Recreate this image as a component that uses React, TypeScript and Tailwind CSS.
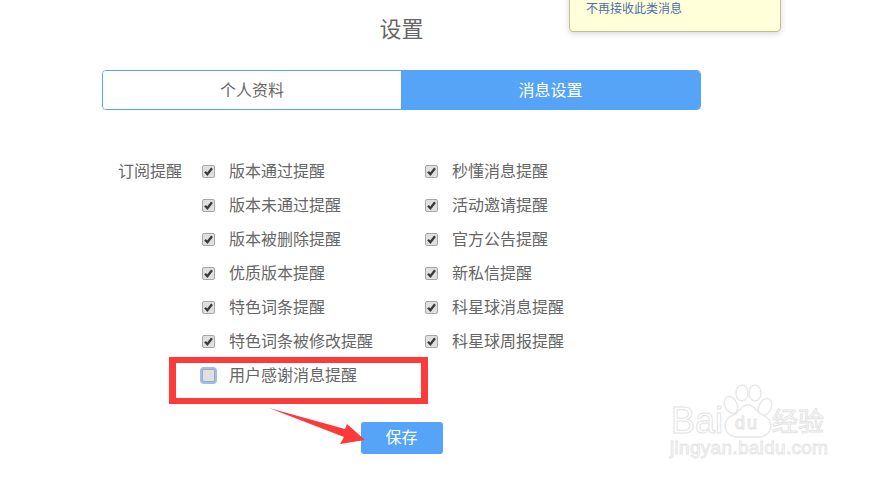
import React from 'react';

const leftItems = ['版本通过提醒', '版本未通过提醒', '版本被删除提醒', '优质版本提醒', '特色词条提醒', '特色词条被修改提醒', '用户感谢消息提醒'];
const rightItems = ['秒懂消息提醒', '活动邀请提醒', '官方公告提醒', '新私信提醒', '科星球消息提醒', '科星球周报提醒'];

function CheckItem({ label, checked = true, focused = false }: { label: string; checked?: boolean; focused?: boolean }) {
  return (
    <div className="flex h-[34px] items-center">
      <span
        className={`mb-[2px] flex h-[13px] w-[13px] shrink-0 items-center justify-center rounded-[2px] border border-[#a6a6a6] bg-[#e0e0e0] ${focused ? 'shadow-[0_0_0_2px_#9dbdf5]' : ''}`}
      >
        {checked && (
          <svg viewBox="0 0 12 12" className="h-[11px] w-[11px]">
            <path d="M2.2 6.2 L4.8 9 L9.8 2.4" fill="none" stroke="#3a3a3a" strokeWidth="2.5" />
          </svg>
        )}
      </span>
      <span className="ml-[14px] whitespace-nowrap text-[16px] leading-none text-[#666666]">{label}</span>
    </div>
  );
}

function Watermark() {
  return (
    <div className="absolute left-[671px] top-[384px] h-[80px] w-[200px] select-none text-white">
      <svg viewBox="0 0 200 60" className="absolute left-0 top-0 h-[60px] w-[200px]" fill="#ffffff" stroke="#e8e8e8" strokeWidth="1.5">
        <ellipse cx="60" cy="21" rx="6" ry="9" transform="rotate(-25 60 21)" />
        <ellipse cx="71" cy="9" rx="6" ry="8" />
        <ellipse cx="84" cy="9" rx="6" ry="8" />
        <ellipse cx="94" cy="23" rx="6" ry="9" transform="rotate(25 94 23)" />
        <path d="M77 21 C69 21 69 29 62 31 C51 35 51 52 66 53 L88 53 C103 52 103 35 92 31 C85 29 85 21 77 21 Z" />
      </svg>
      <span className="absolute left-0 top-[19px] font-['Liberation_Sans',sans-serif] text-[36px] leading-none [-webkit-text-stroke:1px_#e4e4e4]">Bai</span>
      <span className="absolute left-[64px] top-[30px] font-['Liberation_Sans',sans-serif] text-[18px] leading-none tracking-[2px] [-webkit-text-stroke:1px_#e4e4e4]">du</span>
      <span className="absolute left-[101px] top-[23px] font-['Noto_Sans_CJK_SC',sans-serif] text-[26px] leading-none [-webkit-text-stroke:1px_#e4e4e4]">经验</span>
      <span className="absolute left-[-1px] top-[54px] whitespace-nowrap font-['Liberation_Sans',sans-serif] text-[19px] leading-none tracking-[0.3px] [-webkit-text-stroke:1px_#e6e6e6]">jingyan.baidu.com</span>
    </div>
  );
}

export default function App() {
  return (
    <div className="relative h-[478px] w-[875px] overflow-hidden bg-white font-['Liberation_Sans','Noto_Sans_CJK_SC',sans-serif]">
      <div className="ml-[102px] w-[599px] pt-[14px]">
        <h1 className="text-center text-[22px] leading-[32px] text-[#666666]">设置</h1>

        <div className="mt-[24px] flex h-[40px] overflow-hidden rounded-[4px] border border-[#55a4f7] text-[16px]">
          <div className="flex flex-1 items-center justify-center bg-white pt-[2px] text-[#666666]">个人资料</div>
          <div className="flex w-[299px] items-center justify-center bg-[#55a4f7] pt-[2px] text-white">消息设置</div>
        </div>

        <div className="mt-[45px] flex">
          <div className="ml-[16px] flex h-[34px] w-[84px] items-center text-[16px] leading-none text-[#666666]">订阅提醒</div>
          <div className="w-[223px]">
            {leftItems.map((item, i) => (
              <CheckItem key={item} label={item} checked={i !== 6} focused={i === 6} />
            ))}
          </div>
          <div>
            {rightItems.map((item) => (
              <CheckItem key={item} label={item} />
            ))}
          </div>
        </div>

        <div className="mt-[29px] flex justify-center">
          <button className="h-[32px] w-[82px] rounded-[3px] bg-[#55a4f7] text-[16px] text-white">保存</button>
        </div>
      </div>

      {/* tooltip cut off by the top edge */}
      <div className="absolute left-[569px] top-[-20px] h-[52px] w-[212px] rounded-[4px] border border-[#cdbb8e] bg-[#ffffd9] pl-[16px] pt-[20px] text-[12px] leading-[16px] text-[#4a6fae] shadow-[0_2px_6px_rgba(0,0,0,0.15)]">
        不再接收此类消息
      </div>

      {/* red annotation */}
      <div className="absolute left-[169px] top-[357px] h-[47px] w-[259px] border-x-[7px] border-y-[6px] border-[#fc3a3a]" />
      <svg className="absolute left-[260px] top-[400px] h-[50px] w-[110px]" viewBox="0 0 110 50">
        <polygon points="9,8 85,29 87,24 105,40 80,44 84,37" fill="#fc3a3a" />
      </svg>

      <Watermark />
    </div>
  );
}
